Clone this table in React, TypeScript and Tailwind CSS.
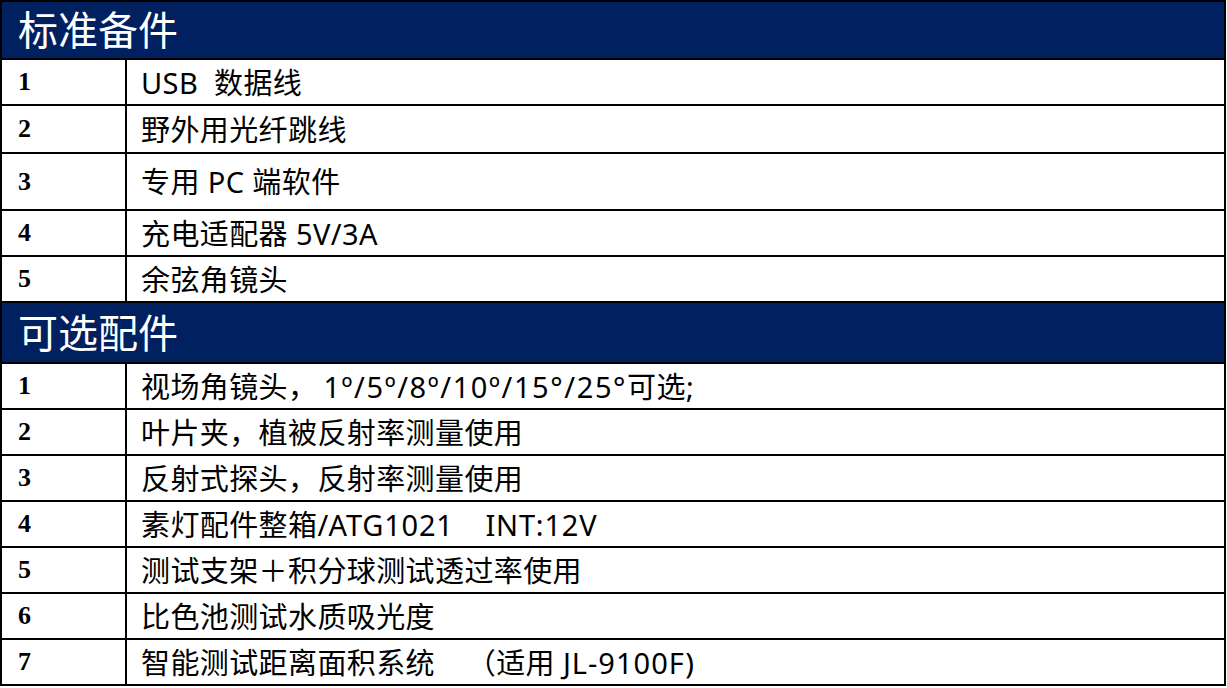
import React from "react";

type R = { n: string; text: React.ReactNode; h: string };

const std: R[] = [
  { n: "1", text: "USB  数据线", h: "h-[46px]" },
  { n: "2", text: "野外用光纤跳线", h: "h-[48px]" },
  { n: "3", text: "专用 PC 端软件", h: "h-[57px]" },
  { n: "4", text: "充电适配器 5V/3A", h: "h-[46px]" },
  { n: "5", text: "余弦角镜头", h: "h-[46px]" },
];

const opt: R[] = [
  {
    n: "1",
    text: (
      <>
        视场角镜头，<span className="tracking-[1.6px] pl-[6px]">1º/5º/8º/10º/15°/25°</span>可选;
      </>
    ),
    h: "h-[46px]",
  },
  { n: "2", text: "叶片夹，植被反射率测量使用", h: "h-[46px]" },
  { n: "3", text: "反射式探头，反射率测量使用", h: "h-[46px]" },
  {
    n: "4",
    text: (
      <>
        素灯配件整箱/<span className="tracking-[0.8px]">ATG1021</span>
        {"\u00a0\u00a0\u00a0\u00a0"}
        <span className="tracking-[0.8px]">INT:12V</span>
      </>
    ),
    h: "h-[46px]",
  },
  { n: "5", text: "测试支架＋积分球测试透过率使用", h: "h-[46px]" },
  { n: "6", text: "比色池测试水质吸光度", h: "h-[46px]" },
  {
    n: "7",
    text: (
      <>
        智能测试距离面积系统{"\u00a0\u00a0\u00a0\u00a0"}（适用 <span className="tracking-[1px]">JL-9100F)</span>
      </>
    ),
    h: "h-[46px]",
  },
];

function Header({ title, h }: { title: string; h: string }) {
  return (
    <div
      className={`${h} flex items-center bg-[#002060] border-b-2 border-black pl-[16px] text-white text-[40px] leading-none font-['Noto_Sans','Noto_Sans_CJK_SC',sans-serif]`}
    >
      {title}
    </div>
  );
}

function Row({ n, text, h }: R) {
  return (
    <div className={`${h} flex border-b-2 border-black`}>
      <div className="w-[125px] shrink-0 border-r-2 border-black flex items-center pl-[16px] font-bold text-[26px] leading-none text-black font-['Liberation_Serif',serif]">
        {n}
      </div>
      <div className="flex-1 flex items-center pl-[14px] text-[29px] tracking-[0.4px] leading-none text-black whitespace-pre font-['Noto_Sans','Noto_Sans_CJK_SC',sans-serif]">
        <span>{text}</span>
      </div>
    </div>
  );
}

export default function App() {
  return (
    <div className="w-[1227px] h-[688px] bg-white overflow-hidden">
      <div className="w-[1226px] border-t-2 border-l-2 border-r-2 border-black">
        <Header title="标准备件" h="h-[58px]" />
        {std.map((r) => (
          <Row key={"s" + r.n} {...r} />
        ))}
        <Header title="可选配件" h="h-[61px]" />
        {opt.map((r) => (
          <Row key={"o" + r.n} {...r} />
        ))}
      </div>
    </div>
  );
}
